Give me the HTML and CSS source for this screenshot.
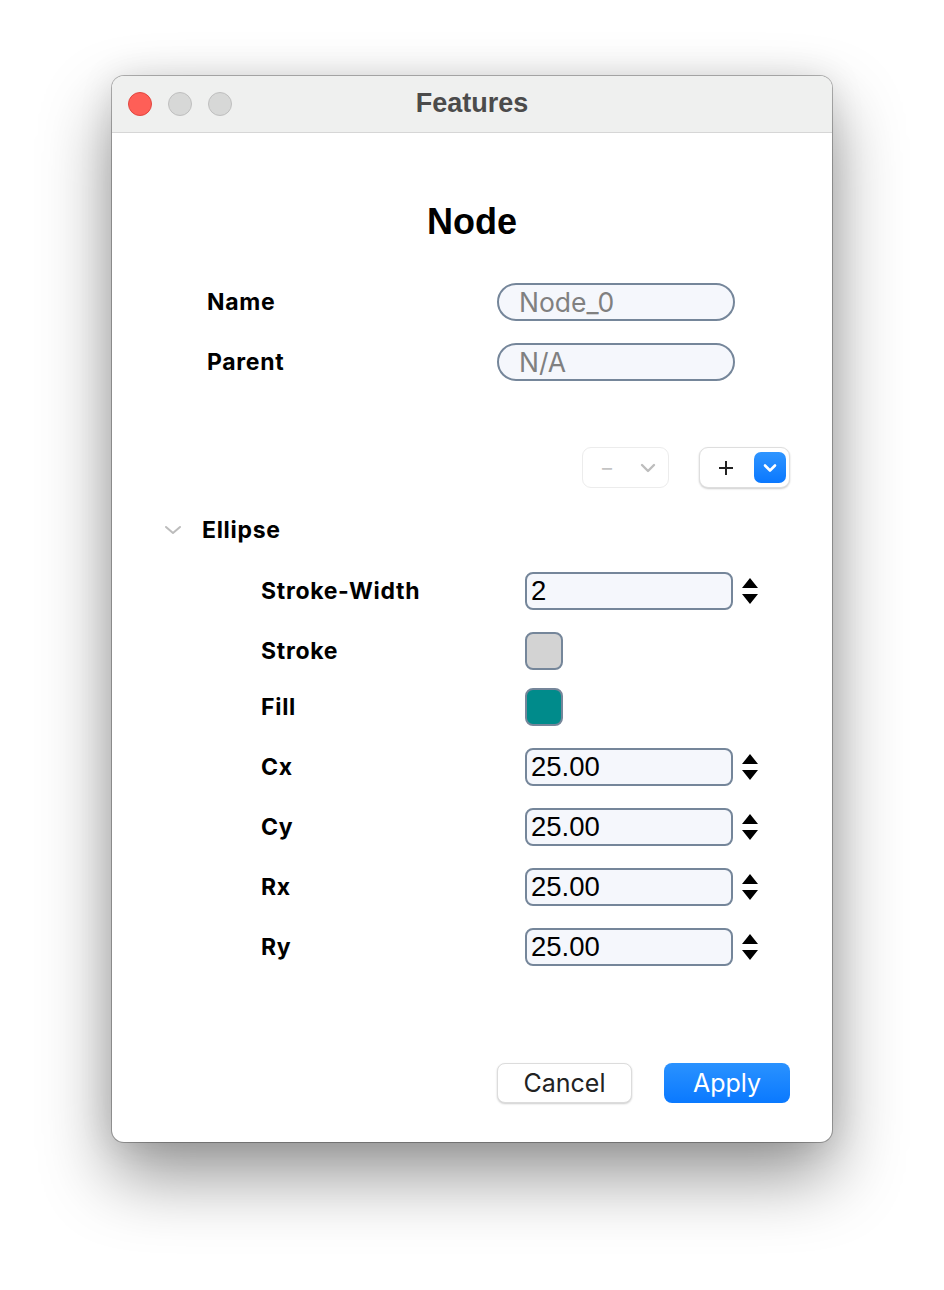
FILE: index.html
```html
<!DOCTYPE html>
<html>
<head>
<meta charset="utf-8">
<link rel="stylesheet" href="styles.css">
</head>
<body>
<div class="window">
  <div class="titlebar">
    <div class="lights">
      <span class="light red"></span>
      <span class="light"></span>
      <span class="light"></span>
    </div>
    <div class="wtitle">Features</div>
  </div>
  <div class="content">
    <h1 class="heading">Node</h1>
    <div class="meta">
      <div class="label">Name</div>
      <div class="pill">Node_0</div>
      <div class="label">Parent</div>
      <div class="pill">N/A</div>
    </div>
    <div class="tools">
      <div class="combo disabled">
        <span class="minus">–</span>
        <svg class="chev" width="16" height="10" viewBox="0 0 16 10"><path d="M2 2 L8 8 L14 2" fill="none" stroke="#bdbdbd" stroke-width="2.4" stroke-linecap="round" stroke-linejoin="round"/></svg>
      </div>
      <div class="combo add">
        <svg class="plus" width="16" height="16" viewBox="0 0 16 16"><path d="M8 1 V15 M1 8 H15" stroke="#222" stroke-width="2"/></svg>
        <span class="bluebox"><svg width="16" height="10" viewBox="0 0 16 10"><path d="M3 2.5 L8 7.5 L13 2.5" fill="none" stroke="#fff" stroke-width="2.6" stroke-linecap="round" stroke-linejoin="round"/></svg></span>
      </div>
    </div>
    <div class="section">
      <svg class="disclose" width="18" height="12" viewBox="0 0 18 12"><path d="M2 3 L9 9 L16 3" fill="none" stroke="#bcbcbc" stroke-width="2" stroke-linecap="round" stroke-linejoin="round"/></svg>
      <span class="secname">Ellipse</span>
    </div>
    <div class="props">
      <div class="row"><div class="plabel">Stroke-Width</div><div class="field">2</div><svg class="spin" width="16" height="26" viewBox="0 0 16 26"><path d="M8 0 L16 10 H0 Z M0 16 H16 L8 26 Z" fill="#000"/></svg></div>
      <div class="row short"><div class="plabel">Stroke</div><div class="swatch gray"></div></div>
      <div class="row"><div class="plabel">Fill</div><div class="swatch teal"></div></div>
      <div class="row"><div class="plabel">Cx</div><div class="field">25.00</div><svg class="spin" width="16" height="26" viewBox="0 0 16 26"><path d="M8 0 L16 10 H0 Z M0 16 H16 L8 26 Z" fill="#000"/></svg></div>
      <div class="row"><div class="plabel">Cy</div><div class="field">25.00</div><svg class="spin" width="16" height="26" viewBox="0 0 16 26"><path d="M8 0 L16 10 H0 Z M0 16 H16 L8 26 Z" fill="#000"/></svg></div>
      <div class="row"><div class="plabel">Rx</div><div class="field">25.00</div><svg class="spin" width="16" height="26" viewBox="0 0 16 26"><path d="M8 0 L16 10 H0 Z M0 16 H16 L8 26 Z" fill="#000"/></svg></div>
      <div class="row"><div class="plabel">Ry</div><div class="field">25.00</div><svg class="spin" width="16" height="26" viewBox="0 0 16 26"><path d="M8 0 L16 10 H0 Z M0 16 H16 L8 26 Z" fill="#000"/></svg></div>
    </div>
    <div class="footer">
      <div class="btn cancel">Cancel</div>
      <div class="btn apply">Apply</div>
    </div>
  </div>
</div>
</body>
</html>
```

FILE: styles.css
```css
html, body {
  margin: 0;
  padding: 0;
  background: #ffffff;
}
body {
  width: 944px;
  height: 1290px;
  overflow: hidden;
  padding-top: 76px;
  padding-left: 112px;
  box-sizing: border-box;
  font-family: Inter, "Noto Sans", sans-serif;
}
.window {
  width: 720px;
  height: 1066px;
  border-radius: 12px;
  background: #ffffff;
  box-shadow: 0 0 0 1px rgba(0,0,0,0.28), 0 34px 70px rgba(0,0,0,0.42), 0 0 34px rgba(0,0,0,0.10);
  overflow: hidden;
  display: flex;
  flex-direction: column;
}
.titlebar {
  height: 56px;
  background: #eff0ef;
  border-bottom: 1px solid #d6d6d6;
  position: relative;
  display: flex;
  align-items: center;
}
.lights {
  display: flex;
  gap: 16px;
  padding-left: 16px;
}
.light {
  width: 22px;
  height: 22px;
  border-radius: 50%;
  background: #d7d8d7;
  border: 1px solid #bfbfbf;
}
.light.red {
  background: #fe5f57;
  border-color: #e2463f;
}
.wtitle {
  position: absolute;
  left: 0;
  right: 0;
  top: 0;
  bottom: 0;
  display: flex;
  align-items: center;
  justify-content: center;
  font-family: "Liberation Sans", Arial, sans-serif;
  font-weight: bold;
  font-size: 27px;
  color: #4b4b4b;
  padding-bottom: 2px;
}
.content {
  flex: 1;
  display: flex;
  flex-direction: column;
}
.heading {
  margin: 69px 0 0 0;
  height: 40px;
  line-height: 40px;
  text-align: center;
  font-family: "Liberation Sans", Arial, sans-serif;
  font-weight: bold;
  font-size: 36px;
  color: #000;
}
.meta {
  margin-top: 41px;
  padding-left: 95px;
  display: grid;
  grid-template-columns: 290px 238px;
  row-gap: 22px;
  align-items: center;
}
.label {
  font-weight: 700;
  font-size: 23px;
  letter-spacing: 0.7px;
  color: #000;
}
.pill {
  height: 38px;
  box-sizing: border-box;
  border: 2px solid #75869a;
  border-radius: 19px;
  background: #f5f7fc;
  color: #808080;
  font-size: 26.5px;
  line-height: 34px;
  padding-left: 20px;
}
.tools {
  margin-top: 66px;
  display: flex;
  justify-content: flex-end;
  gap: 30px;
  padding-right: 42px;
  height: 41px;
}
.combo {
  box-sizing: border-box;
  height: 41px;
  border-radius: 9px;
  background: #fff;
  border: 1px solid #e6e6e6;
  box-shadow: 0 1px 2px rgba(0,0,0,0.12);
  display: flex;
  align-items: center;
}
.combo.disabled {
  width: 87px;
  box-shadow: none;
  border-color: #ececec;
}
.minus {
  color: #c4c4c4;
  font-size: 20px;
  margin-left: 19px;
  width: 12px;
}
.chev {
  margin-left: 26px;
}
.combo.add {
  width: 91px;
  border-color: #dedede;
  box-shadow: 0 1px 2px rgba(0,0,0,0.2);
}
.plus {
  margin-left: 18px;
}
.bluebox {
  margin-left: 20px;
  width: 32px;
  height: 31px;
  border-radius: 7px;
  background: linear-gradient(#2f95ff, #0a78ff);
  display: flex;
  align-items: center;
  justify-content: center;
}
.section {
  margin-top: 27px;
  height: 30px;
  display: flex;
  align-items: center;
  padding-left: 52px;
}
.disclose {
  margin-right: 20px;
}
.secname {
  font-weight: 700;
  font-size: 23px;
  letter-spacing: 0.7px;
  color: #000;
}
.props {
  margin-top: 27px;
  padding-left: 149px;
  display: flex;
  flex-direction: column;
}
.row {
  display: flex;
  align-items: center;
  height: 38px;
  margin-bottom: 22px;
}
.row.short {
  margin-bottom: 18px;
}
.plabel {
  width: 264px;
  font-weight: 700;
  font-size: 23px;
  letter-spacing: 0.7px;
  color: #000;
}
.field {
  width: 208px;
  height: 38px;
  box-sizing: border-box;
  border: 2px solid #75869a;
  border-radius: 8px;
  background: #f5f7fc;
  font-family: "Liberation Sans", Arial, sans-serif;
  font-size: 27.5px;
  line-height: 34px;
  padding-left: 4px;
  color: #000;
}
.spin {
  margin-left: 9px;
}
.swatch {
  width: 38px;
  height: 38px;
  box-sizing: border-box;
  border: 2px solid #75869a;
  border-radius: 8px;
}
.swatch.gray {
  background: #d3d3d3;
}
.swatch.teal {
  background: #008b8b;
}
.footer {
  margin-top: 75px;
  display: flex;
  justify-content: flex-end;
  gap: 32px;
  padding-right: 42px;
}
.btn {
  height: 40px;
  box-sizing: border-box;
  border-radius: 8px;
  display: flex;
  align-items: center;
  justify-content: center;
  font-size: 25px;
}
.cancel {
  width: 135px;
  background: #fff;
  border: 1px solid #dcdcdc;
  box-shadow: 0 1px 2px rgba(0,0,0,0.2);
  color: #222;
}
.apply {
  width: 126px;
  background: linear-gradient(#2a92ff, #0a79ff);
  color: #fff;
}
```
